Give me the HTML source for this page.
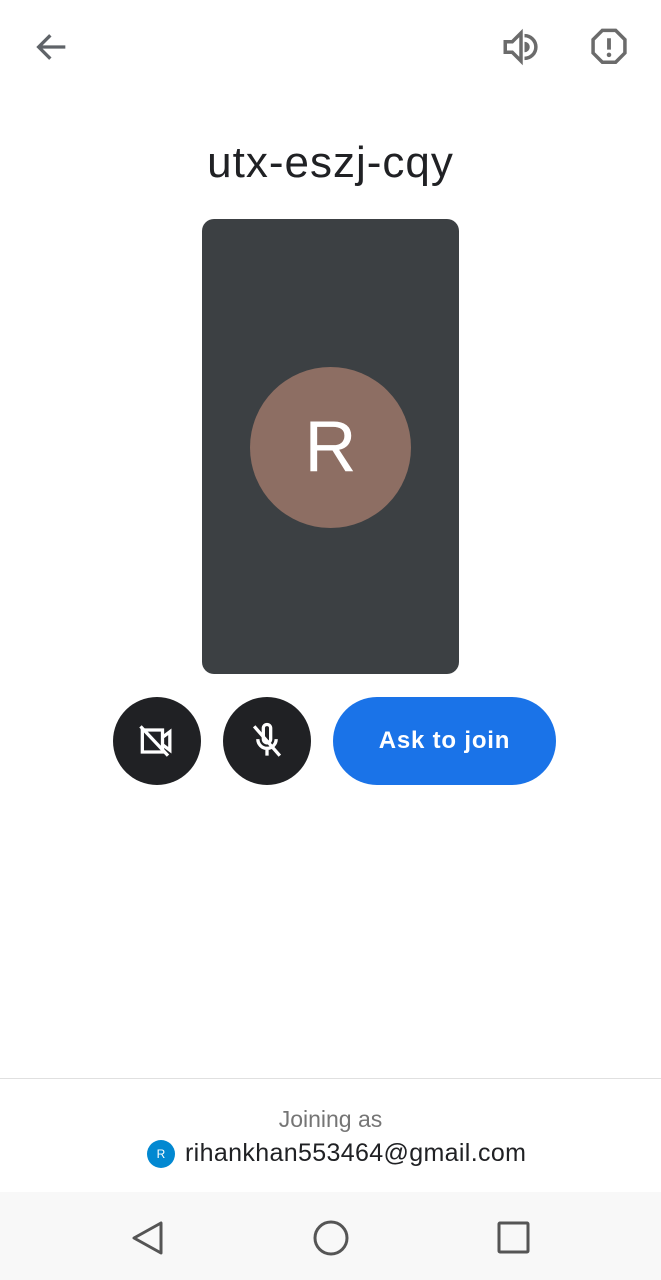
<!DOCTYPE html>
<html><head><meta charset="utf-8"><style>
body{margin:0;width:661px;height:1280px;background:#fff;position:relative;overflow:hidden;font-family:"Liberation Sans",sans-serif}
.a{position:absolute}
</style></head><body>
<svg class="a" style="left:32px;top:27px" width="40" height="40" viewBox="0 0 24 24"><path d="M20 12H5M11 5l-7 7 7 7" fill="none" stroke="#5f6368" stroke-width="2"/></svg>
<svg class="a" style="left:500px;top:26px" width="42" height="42" viewBox="0 0 24 24"><path d="M3 9v6h4l5 5V4L7 9z" fill="none" stroke="#6b6b6b" stroke-width="2"/><path d="M14 5.5a6.5 6.5 0 0 1 0 13" fill="none" stroke="#6b6b6b" stroke-width="2"/><path d="M14 9a3 3 0 0 1 0 6z" fill="#6b6b6b"/></svg>
<svg class="a" style="left:588px;top:26px" width="42" height="42" viewBox="0 0 24 24"><path d="M8.2 2.5h7.6l5.3 5.3v7.6l-5.3 5.3H8.2l-5.3-5.3V7.8z" fill="none" stroke="#6b6b6b" stroke-width="2"/><path d="M12 7v6.5" stroke="#6b6b6b" stroke-width="2.2"/><circle cx="12" cy="16.5" r="1.3" fill="#6b6b6b"/></svg>
<div class="a" style="left:0;width:661px;top:138px;text-align:center;font-size:44px;letter-spacing:1px;color:#202124">utx-eszj-cqy</div>
<div class="a" style="left:202px;top:219px;width:257px;height:455px;background:#3c4043;border-radius:12px"></div>
<div class="a" style="left:250px;top:367px;width:161px;height:161px;border-radius:50%;background:#8d6e63;color:#fff;font-size:72px;text-align:center;line-height:161px">R</div>
<div class="a" style="left:113px;top:697px;width:88px;height:88px;border-radius:50%;background:#202124"></div>
<svg class="a" style="left:135px;top:719px" width="44" height="44" viewBox="0 0 24 24"><path d="M4 6h11v12H4z M15 10l4-3v10l-4-3z" fill="none" stroke="#fff" stroke-width="1.8"/><path d="M3 4l15 16" stroke="#fff" stroke-width="1.8"/></svg>
<div class="a" style="left:223px;top:697px;width:88px;height:88px;border-radius:50%;background:#202124"></div>
<svg class="a" style="left:245px;top:719px" width="44" height="44" viewBox="0 0 24 24"><path d="M10 5a2 2 0 0 1 4 0v6a2 2 0 0 1-4 0z M7 11a5 5 0 0 0 10 0 M12 16v4" fill="none" stroke="#fff" stroke-width="1.8"/><path d="M5 4l14 16" stroke="#fff" stroke-width="1.8"/></svg>
<div class="a" style="left:333px;top:697px;width:223px;height:88px;border-radius:44px;background:#1a73e8;color:#fff;font-size:24px;text-align:center;line-height:88px;font-weight:bold;letter-spacing:0.8px">Ask to join</div>
<div class="a" style="left:0;top:1078px;width:661px;height:1px;background:#e0e0e0"></div>
<div class="a" style="left:0;width:661px;top:1106px;text-align:center;font-size:23px;color:#757575">Joining as</div>
<div class="a" style="left:147px;top:1140px;width:28px;height:28px;border-radius:50%;background:#0288d1;color:#fff;font-size:12px;text-align:center;line-height:28px">R</div>
<div class="a" style="left:185px;top:1139px;font-size:25px;letter-spacing:0.35px;color:#202124">rihankhan553464@gmail.com</div>
<div class="a" style="left:0;top:1192px;width:661px;height:88px;background:#f8f8f8"></div>
<svg class="a" style="left:128px;top:1218px" width="40" height="40" viewBox="0 0 40 40"><path d="M33 5v30L6 20z" fill="none" stroke="#555" stroke-width="3" stroke-linejoin="round"/></svg>
<svg class="a" style="left:311px;top:1218px" width="40" height="40" viewBox="0 0 40 40"><circle cx="20" cy="20" r="16" fill="none" stroke="#555" stroke-width="3"/></svg>
<svg class="a" style="left:494px;top:1218px" width="40" height="40" viewBox="0 0 40 40"><rect x="5" y="5" width="29" height="29" rx="1" fill="none" stroke="#555" stroke-width="3"/></svg>
</body></html>
